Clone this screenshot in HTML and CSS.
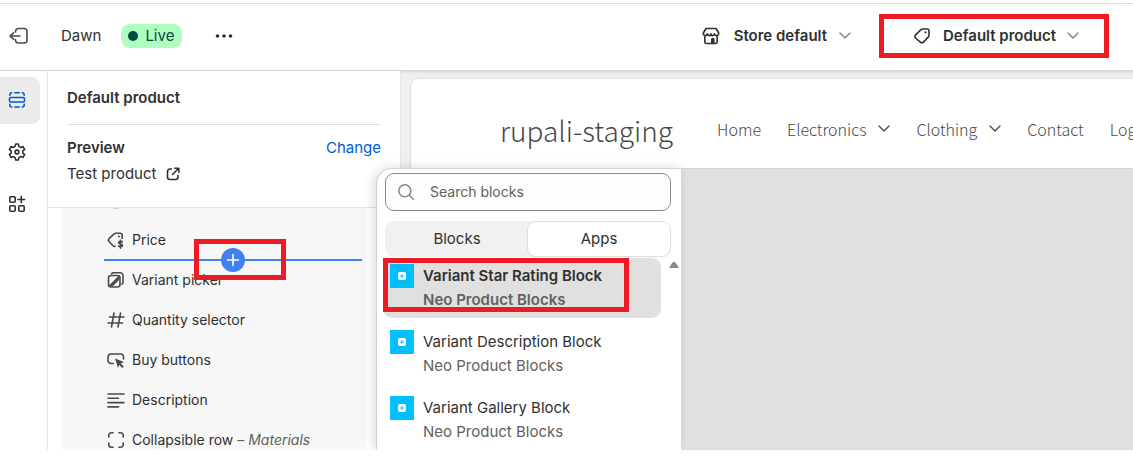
FILE: index.html
```html
<!DOCTYPE html>
<html lang="en">
<head>
<meta charset="utf-8">
<title>Dawn theme editor</title>
<link rel="stylesheet" href="styles.css">
</head>
<body>
<div class="app">
  <header class="topbar">
    <button class="icon-button exit" aria-label="Exit editor">
      <svg width="20" height="18" viewBox="0 0 20 18"><path d="M6.500 5V4.500a3 3 0 0 1 3-3H15a3 3 0 0 1 3 3v8.500a3 3 0 0 1-3 3H9.500a3 3 0 0 1-3-3v-.5M11 9H1M4.500 5.800 1 9l3.500 3.200"/></svg>
    </button>
    <span class="theme-name">Dawn</span>
    <span class="badge"><span class="badge-dot"></span>Live</span>
    <button class="icon-button more" aria-label="More actions">
      <svg width="18" height="6" viewBox="0 0 18 6"><g class="solid"><circle cx="2.500" cy="3" r="1.800"/><circle cx="9" cy="3" r="1.800"/><circle cx="15.500" cy="3" r="1.800"/></g></svg>
    </button>
    <div class="pickers">
      <button class="picker">
        <svg width="18" height="18" viewBox="0 0 18 18"><path d="M4 1.500h10l2.700 4.500c.5 3-3.700 3.500-4.200.8C12 9.200 9.300 9.200 9 6.800 8.700 9.200 6 9.200 5.500 6.800 5 9.500.8 9 1.300 6zM2.800 8.800v5.700a2 2 0 0 0 2 2h8.400a2 2 0 0 0 2-2V8.800"/><path class="solid" d="M9 16v-3.500a1.800 1.800 0 0 1 3.600 0V16z"/></svg>
        <span>Store default</span>
        <svg class="chevron" width="12" height="8" viewBox="0 0 12 8"><path d="m1 1 5 5 5-5"/></svg>
      </button>
      <button class="picker picker-product">
        <svg width="18" height="18" viewBox="0 0 18 18"><path d="M9.700 2h4.500A1.800 1.800 0 0 1 16 3.800v4.500c0 .7-.3 1.300-.8 1.800l-4.700 5a2.200 2.200 0 0 1-3.200 0L2.600 11a2.200 2.200 0 0 1 0-3.200L8 2.700c.5-.5 1-.7 1.700-.7z"/><circle class="solid" cx="12.500" cy="5.300" r="1.100"/></svg>
        <span>Default product</span>
        <svg class="chevron" width="12" height="8" viewBox="0 0 12 8"><path d="m1 1 5 5 5-5"/></svg>
        <span class="callout callout-product"></span>
      </button>
    </div>
  </header>

  <main class="workspace">
    <nav class="rail" aria-label="Editor">
      <button class="rail-button rail-active" aria-label="Sections">
        <svg width="18" height="18" viewBox="0 0 18 18"><rect x="1.500" y="6.500" width="15" height="4.500" rx="1.200"/><path d="M1.800 4.300v-.5a2 2 0 0 1 2-2M6.800 1.800h4.400M14.200 1.800a2 2 0 0 1 2 2v.5M1.800 13.400v.6a2 2 0 0 0 2 2M6.800 16h4.400M14.200 16a2 2 0 0 0 2-2v-.6"/></svg>
      </button>
      <button class="rail-button" aria-label="Theme settings">
        <svg width="18" height="18" viewBox="0 0 18 18"><path d="M7.700 1h2.600l.6 2.400 1.700 1 2.400-.8 1.600 2.700-1.800 1.700v2l1.800 1.700-1.600 2.700-2.400-.8-1.700 1-.6 2.400H7.700l-.6-2.400-1.700-1-2.400.8-1.600-2.700L3.200 10V8L1.400 6.300 3 3.600l2.400.8 1.700-1z"/><circle cx="9" cy="9" r="1.900"/></svg>
      </button>
      <button class="rail-button" aria-label="App embeds">
        <svg width="18" height="18" viewBox="0 0 18 18"><rect x="1.800" y="1.800" width="5.400" height="5.400" rx="1"/><rect x="1.800" y="10.800" width="5.400" height="5.400" rx="1"/><rect x="10.800" y="10.800" width="5.400" height="5.400" rx="1"/><path d="M13.300 1.200v6.600M10 4.500h6.600"/></svg>
      </button>
    </nav>

    <aside class="panel">
      <div class="panel-head">
        <h1 class="panel-title">Default product</h1>
        <div class="preview-row"><h2 class="preview-label">Preview</h2><a class="change" href="#">Change</a></div>
        <a class="preview-link" href="#">Test product
          <svg width="14" height="14" viewBox="0 0 14 14"><path d="M5.500 2H4a2.500 2.500 0 0 0-2.500 2.500V10A2.500 2.500 0 0 0 4 12.500h5.500A2.500 2.500 0 0 0 12 10V8.500M8.800 1.200h4v4M12.500 1.500 6.500 7.500"/></svg>
        </a>
      </div>
      <ul class="block-list">
        <li class="block-row">
          <svg width="18" height="18" viewBox="0 0 18 18"><path d="M8 15.200c-.8.300-1.400.1-2-.5L2 10.500a2 2 0 0 1 0-2.800l5.200-4.800c.5-.5 1-.7 1.700-.7h4.300a2 2 0 0 1 2 2v3.300"/><circle class="solid" cx="11.900" cy="5.400" r="1"/><path d="M15.300 11c-.5-.8-3.600-1-3.600.7 0 1.900 3.800.9 3.800 2.800 0 1.600-3.300 1.500-4 .5M13.500 9.200v8"/></svg>
          <span>Price</span>
        </li>
        <li class="block-row">
          <svg width="18" height="18" viewBox="0 0 18 18"><rect x="1.500" y="4.500" width="11.500" height="11.500" rx="2.500"/><path d="M4.500 2.800c.5-.8 1-1.100 2-1.100h6.500a3 3 0 0 1 3 3v6.500c0 1-.4 1.500-1 2M2.500 15 12.500 5"/><path class="solid" d="m3 15 9-9v3l-6 6z"/></svg>
          <span>Variant picker</span>
          <div class="insert">
            <button class="insert-button" aria-label="Add block"><svg width="14" height="14" viewBox="0 0 14 14"><path d="M7 1.500v11M1.500 7h11"/></svg></button>
            <span class="callout callout-insert"></span>
          </div>
        </li>
        <li class="block-row">
          <svg width="18" height="18" viewBox="0 0 18 18"><path d="M7 2 4.500 16M13.500 2 11 16M2.500 6H17M1 12h14.500"/></svg>
          <span>Quantity selector</span>
        </li>
        <li class="block-row">
          <svg width="18" height="18" viewBox="0 0 18 18"><path d="M6.500 12.500H4a3 3 0 0 1-3-3V6a3 3 0 0 1 3-3h9.500a3 3 0 0 1 3 3v2"/><path class="solid" d="m8 7.500 9 3.600-3.200 1.500 3 2.900-1.500 1.500-3-3L11 17z"/></svg>
          <span>Buy buttons</span>
        </li>
        <li class="block-row">
          <svg width="18" height="18" viewBox="0 0 18 18"><path d="M1 3h16M1 7.300h10.500M1 11.600h16M1 15.900h10.500"/></svg>
          <span>Description</span>
        </li>
        <li class="block-row">
          <svg width="18" height="18" viewBox="0 0 18 18"><path d="M1.800 6V4.300a2.500 2.500 0 0 1 2.500-2.500H6M12 1.800h1.700a2.500 2.500 0 0 1 2.500 2.500V6M16.200 12v1.700a2.500 2.500 0 0 1-2.500 2.500H12M6 16.200H4.300a2.500 2.500 0 0 1-2.500-2.500V12"/></svg>
          <span>Collapsible row <span class="muted">– <em>Materials</em></span></span>
        </li>
      </ul>
    </aside>

    <section class="canvas">
      <div class="storefront">
        <div class="site-header">
          <a class="site-logo" href="#">rupali-staging</a>
          <nav class="site-nav" aria-label="Store">
            <a href="#">Home</a>
            <a href="#">Electronics <svg width="12" height="8" viewBox="0 0 12 8"><path d="m1 1 5 5 5-5"/></svg></a>
            <a href="#">Clothing <svg width="12" height="8" viewBox="0 0 12 8"><path d="m1 1 5 5 5-5"/></svg></a>
            <a href="#">Contact</a>
            <a href="#">Log in</a>
          </nav>
        </div>
        <div class="site-body"></div>
      </div>
    </section>

    <div class="popover">
      <label class="search">
        <svg width="18" height="18" viewBox="0 0 18 18"><circle cx="7.800" cy="7.800" r="6"/><path d="m12.300 12.300 4 4"/></svg>
        <input type="text" placeholder="Search blocks" aria-label="Search blocks">
      </label>
      <div class="tabs">
        <button class="tab">Blocks</button>
        <button class="tab tab-active">Apps</button>
      </div>
      <div class="results">
        <ul class="app-list">
          <li class="app-item app-selected">
            <svg class="app-icon" width="24" height="24" viewBox="0 0 24 24"><rect class="app-tile" width="24" height="24"/><rect class="app-mark" x="8" y="8" width="8" height="8" rx="2"/><path class="app-plus" d="M12 10.500v3M10.500 12h3"/></svg>
            <div><div class="app-title">Variant Star Rating Block</div><div class="app-vendor">Neo Product Blocks</div></div>
            <span class="callout callout-app"></span>
          </li>
          <li class="app-item">
            <svg class="app-icon" width="24" height="24" viewBox="0 0 24 24"><rect class="app-tile" width="24" height="24"/><rect class="app-mark" x="8" y="8" width="8" height="8" rx="2"/><path class="app-plus" d="M12 10.500v3M10.500 12h3"/></svg>
            <div><div class="app-title">Variant Description Block</div><div class="app-vendor">Neo Product Blocks</div></div>
          </li>
          <li class="app-item">
            <svg class="app-icon" width="24" height="24" viewBox="0 0 24 24"><rect class="app-tile" width="24" height="24"/><rect class="app-mark" x="8" y="8" width="8" height="8" rx="2"/><path class="app-plus" d="M12 10.500v3M10.500 12h3"/></svg>
            <div><div class="app-title">Variant Gallery Block</div><div class="app-vendor">Neo Product Blocks</div></div>
          </li>
        </ul>
        <svg class="scroll-up" width="10" height="8" viewBox="0 0 10 8"><path class="solid" d="M4 1h2l3.500 5v1h-9V6z"/></svg>
      </div>
    </div>
  </main>
</div>
</body>
</html>
```
FILE: styles.css
```css
* { box-sizing: border-box; }

body {
  margin: 0;
  background: #fff;
  color: #303030;
  font: 15px/24px Inter, "Liberation Sans", sans-serif;
}

button {
  border: 0;
  padding: 0;
  background: none;
  color: inherit;
  font: inherit;
}

a { color: inherit; text-decoration: none; }

ul { list-style: none; margin: 0; padding: 0; }

svg {
  flex: none;
  display: block;
  fill: none;
  stroke: currentColor;
  stroke-width: 1.6;
  stroke-linecap: round;
  stroke-linejoin: round;
}

.solid { fill: currentColor; stroke: none; }

.app {
  display: flex;
  flex-direction: column;
  height: calc(100vh - 8px);
  padding-top: 3px;
  overflow: hidden;
}

/* Top bar */
.topbar {
  flex: none;
  display: flex;
  align-items: center;
  height: 68px;
  padding: 0 24px 2px 9px;
  border-top: 1px solid #e0e0e0;
  border-bottom: 1px solid #d4d4d4;
}

.exit { color: #4a4a4a; }
.theme-name { margin-left: 32px; }

.badge {
  display: flex;
  align-items: center;
  gap: 7px;
  margin-left: 20px;
  padding: 0 8px 0 7px;
  border-radius: 9px;
  background: #affebf;
  color: #014b40;
}

.badge-dot {
  width: 10px;
  height: 10px;
  border-radius: 50%;
  background: #014b40;
}

.more { margin-left: 33px; }
.pickers { display: flex; gap: 28px; margin-left: auto; }

.picker {
  position: relative;
  display: flex;
  align-items: center;
  height: 44px;
  font-weight: 600;
}

.picker span { margin: 0 12px 0 14px; }
.picker-product { padding: 0 30px 0 34px; }
.picker-product span { margin: 0 11px 0 12px; }
.chevron { color: #8a8a8a; }

/* Highlight frames over controls */
.callout {
  position: absolute;
  z-index: 2;
  border: 5px solid #ed1c24;
  pointer-events: none;
}

.picker .callout-product { inset: 0; margin: 0; }
.callout-insert { top: -20px; left: 90px; width: 92px; height: 41px; }
.callout-app { top: 0; left: 0; width: 246px; height: 54px; }

/* Workspace */
.workspace { position: relative; flex: 1; display: flex; min-height: 0; }

.rail {
  flex: none;
  display: flex;
  flex-direction: column;
  gap: 5px;
  width: 48px;
  padding-top: 6px;
  border-right: 1px solid #e3e3e3;
}

.rail-button {
  display: flex;
  align-items: center;
  width: 40px;
  height: 47px;
  padding: 0 0 2px 8px;
  border-radius: 0 8px 8px 0;
}

.rail-active { background: #ebebeb; color: #005bd3; }

.panel { flex: none; display: flex; flex-direction: column; width: 352px; }

.panel-head {
  flex: none;
  height: 137px;
  padding: 0 19px;
  border-bottom: 1px solid #e3e3e3;
}

.panel-title {
  margin: 0 0 11px;
  padding: 15px 0 14px;
  border-bottom: 1px solid #e0e0e0;
  font-size: 15px;
  font-weight: 600;
}

.preview-row { display: flex; justify-content: space-between; margin-bottom: 2px; }
.preview-label { margin: 0; font-size: 15px; font-weight: 600; }
.change { color: #005bd3; }
.preview-link { display: flex; align-items: center; gap: 10px; }

.block-list {
  flex: 1;
  margin: 0 34px 0 14px;
  background: #f7f7f7;
  font-size: 14px;
}

/* Bottom edge of the row that is scrolled out of view */
.block-list::before {
  content: "";
  display: block;
  width: 6px;
  height: 1px;
  margin: 0 0 11px 51px;
  background: #cfcfcf;
}

.block-row {
  position: relative;
  display: flex;
  align-items: center;
  gap: 7px;
  height: 40px;
  margin: 0 4px 0 42px;
  padding-left: 3px;
  white-space: nowrap;
}

.block-row > svg { color: #4a4a4a; }
.muted { color: #616161; }

.insert {
  position: absolute;
  top: -1px;
  left: 0;
  right: 0;
  height: 2px;
  background: #4080f0;
}

.insert-button {
  position: absolute;
  top: -11px;
  left: 117px;
  display: grid;
  place-items: center;
  width: 24px;
  height: 24px;
  border-radius: 50%;
  background: #4080f0;
  color: #fff;
}

/* Store preview */
.canvas {
  flex: 1;
  min-width: 0;
  padding: 7px 0 0 9px;
  border-left: 1px solid #e6e6e6;
  background: #f0f0f0;
  box-shadow: inset 0 3px 3px -2px #d4d4d4;
}

.storefront {
  display: flex;
  flex-direction: column;
  height: 100%;
  overflow: hidden;
  border: 1px solid #e0e0e0;
  border-right: 0;
  border-radius: 8px 0 0 0;
  background: #fff;
}

.site-header {
  flex: none;
  display: flex;
  align-items: center;
  gap: 44px;
  height: 89px;
  padding: 12px 0 0 89px;
  color: #484848;
  font-family: "Noto Sans CJK SC", "Noto Sans", sans-serif;
  font-weight: 300;
  white-space: nowrap;
}

.site-logo { font-size: 28px; line-height: 36px; }
.site-nav { display: flex; gap: 26px; padding-bottom: 2px; font-size: 16px; }
.site-nav a { display: flex; align-items: center; gap: 12px; }
.site-nav svg { stroke-width: 1.4; }
.site-body { flex: 1; border-top: 1px solid #d4d4d4; background: #e1e1e1; }

/* Block search popover */
.popover {
  position: absolute;
  top: 97px;
  bottom: 0;
  left: 376px;
  width: 305px;
  padding: 4px 10px 0 8px;
  overflow: hidden;
  border: solid #d4d4d4;
  border-width: 1px 0 0 1px;
  border-radius: 16px 0 0 0;
  background: #fff;
  box-shadow: -2px 0 12px #00000026;
}

.search {
  display: flex;
  align-items: center;
  gap: 15px;
  height: 38px;
  padding: 0 11px;
  border: 1px solid #8a8a8a;
  border-radius: 9px;
  background: #fdfdfd;
  color: #8a8a8a;
}

.search input {
  flex: 1;
  min-width: 0;
  padding: 0;
  border: 0;
  outline: 0;
  background: none;
  color: #303030;
  font: inherit;
  font-size: 14px;
}

.search input::placeholder { color: #616161; opacity: 1; }

.tabs {
  display: grid;
  grid-template-columns: 1fr 1fr;
  height: 36px;
  margin-top: 10px;
  padding: 1px;
  border-radius: 9px;
  background: #f1f1f1;
}

.tab { border-radius: 8px; }
.tab-active { background: #fff; box-shadow: 0 0 0 1px #dedede, 0 1px 2px #0000001a; }

.results { display: flex; justify-content: space-between; margin: 1px -8px 0 -2px; }
.app-list { width: 278px; }

.app-item {
  position: relative;
  display: flex;
  gap: 9px;
  height: 60px;
  margin-bottom: 6px;
  padding: 6px 7px;
  border-radius: 9px;
}

.app-selected { background: #e0e0e0; font-weight: 600; }
.app-vendor { color: #616161; }
.app-tile { fill: #00bfff; stroke: none; }
.app-mark { fill: #fff; stroke: none; }
.app-plus { stroke: #00bfff; stroke-width: 1; }
.scroll-up { margin-top: 3px; color: #8a8a8a; }
```
